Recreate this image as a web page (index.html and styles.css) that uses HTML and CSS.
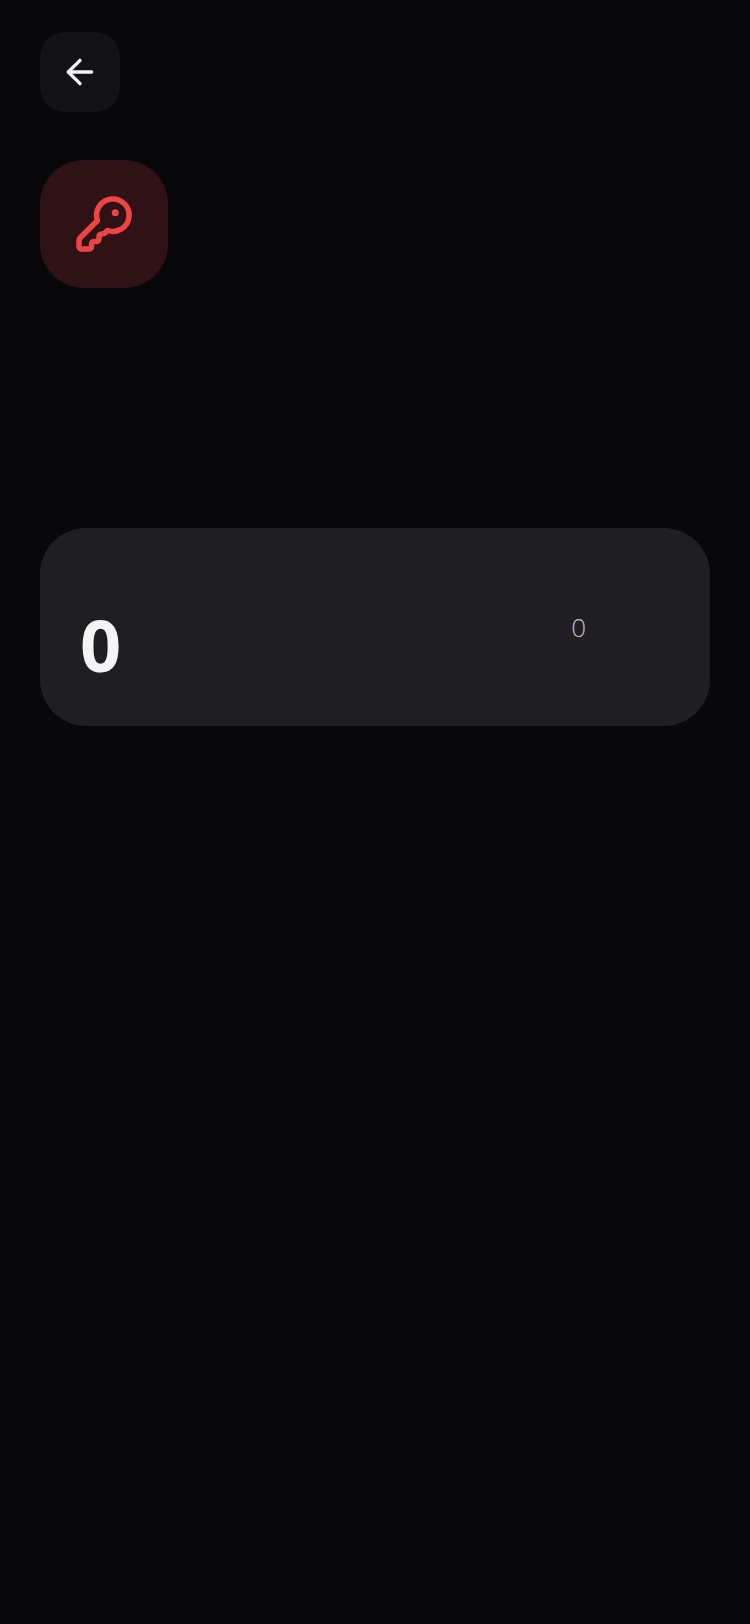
FILE: index.html
```html
<!DOCTYPE html>
<html lang="en">
<head>
<meta charset="utf-8">
<title>Keys</title>
<link rel="stylesheet" href="styles.css">
</head>
<body>
<main class="page">
  <button class="back" type="button" aria-label="Back">
    <svg class="back-icon" viewBox="0 0 24 24" fill="none" stroke="currentColor" stroke-width="2" stroke-linecap="round" stroke-linejoin="round"><path d="m12 19-7-7 7-7"/><path d="M19 12H5"/></svg>
  </button>
  <div class="tile">
    <svg class="tile-icon" viewBox="0 0 24 24" fill="none" stroke="currentColor" stroke-width="2.2" stroke-linecap="round" stroke-linejoin="round"><path d="M2.586 17.414A2 2 0 0 0 2 18.828V21a1 1 0 0 0 1 1h3a1 1 0 0 0 1-1v-1a1 1 0 0 1 1-1h1a1 1 0 0 0 1-1v-1a1 1 0 0 1 1-1h.172a2 2 0 0 0 1.414-.586l.814-.814a6.5 6.5 0 1 0-4-4z"/><circle class="key-dot" cx="16.5" cy="7.5" r="1.4"/></svg>
  </div>
  <section class="card">
    <div class="value">0</div>
    <div class="side">0</div>
  </section>
</main>
</body>
</html>
```
FILE: styles.css
```css
* { box-sizing: border-box; }
html, body { margin: 0; height: 100%; }
body {
  background: #08080a;
  font-family: "Open Sans", "Liberation Sans", sans-serif;
}
.page {
  display: flex;
  flex-direction: column;
  align-items: flex-start;
  min-height: 1624px;
  padding: 32px 40px;
}
.back {
  display: flex;
  align-items: center;
  justify-content: center;
  width: 80px;
  height: 80px;
  padding: 0;
  border: 0;
  border-radius: 26px;
  background: #131317;
  color: #f4f4f5;
}
.back-icon { width: 40px; height: 40px; }
.tile {
  display: flex;
  align-items: center;
  justify-content: center;
  width: 128px;
  height: 128px;
  margin-top: 48px;
  border-radius: 44px;
  background: #2e1215;
  color: #ef4444;
}
.tile-icon { width: 60px; height: 60px; }
.key-dot { fill: currentColor; stroke: none; }
.card {
  display: flex;
  justify-content: space-between;
  align-items: flex-end;
  width: 670px;
  height: 198px;
  margin-top: 240px;
  padding: 0 124px 46px 40px;
  border-radius: 46px;
  background: #1f1f23;
}
.value {
  font-size: 72px;
  line-height: 72px;
  font-weight: 700;
  color: #f4f4f5;
}
.side {
  align-self: center;
  margin-bottom: -46px;
  font-size: 26px;
  font-weight: 300;
  line-height: 32px;
  color: #bcbcc3;
}
```
